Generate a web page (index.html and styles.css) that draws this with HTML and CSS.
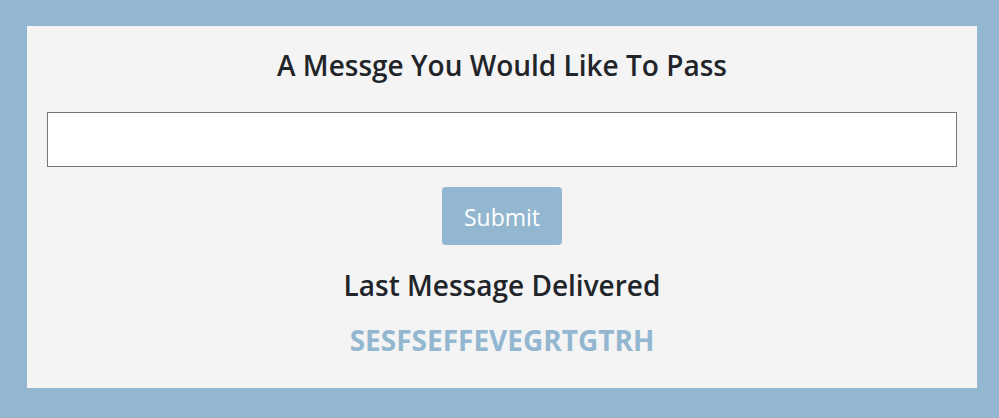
FILE: index.html
```html
<!DOCTYPE html>
<html lang="en">
<head>
<meta charset="utf-8">
<title>Message</title>
<link rel="stylesheet" href="styles.css">
</head>
<body>
<main class="card">
  <h1 class="title">A Messge You Would Like To Pass</h1>
  <input class="msg-input" type="text" aria-label="Message">
  <button class="submit-btn" type="button">Submit</button>
  <h2 class="title last-title">Last Message Delivered</h2>
  <p class="last-msg">SESFSEFFEVEGRTGTRH</p>
</main>
</body>
</html>
```
FILE: styles.css
```css
html, body {
  margin: 0;
  height: 100%;
}
body {
  background: #93b7d0;
  padding: 26px 22px 30px 27px;
  box-sizing: border-box;
  font-family: "Open Sans", "Noto Sans", sans-serif;
  color: #212529;
}
.card {
  background: #f4f4f4;
  height: 100%;
  box-sizing: border-box;
  display: flex;
  flex-direction: column;
  align-items: center;
  padding: 21px 20px 30px;
}
.title {
  margin: 0;
  font-size: 28px;
  font-weight: 600;
  line-height: 36px;
  text-align: center;
}
.msg-input {
  align-self: stretch;
  margin-top: 29px;
  height: 55px;
  box-sizing: border-box;
  border: 1px solid #767676;
  border-radius: 0;
  background: #fff;
  padding: 0 10px;
  font: inherit;
}
.submit-btn {
  margin-top: 20px;
  width: 120px;
  height: 59px;
  padding: 3px 0 0;
  border: none;
  border-radius: 4px;
  background: #93b7d0;
  color: #fff;
  font-family: inherit;
  font-size: 23px;
  cursor: pointer;
}
.last-title {
  margin-top: 22px;
}
.last-msg {
  margin: 19px 0 0;
  font-size: 28px;
  font-weight: 700;
  line-height: 36px;
  color: #93b7d0;
}
```
